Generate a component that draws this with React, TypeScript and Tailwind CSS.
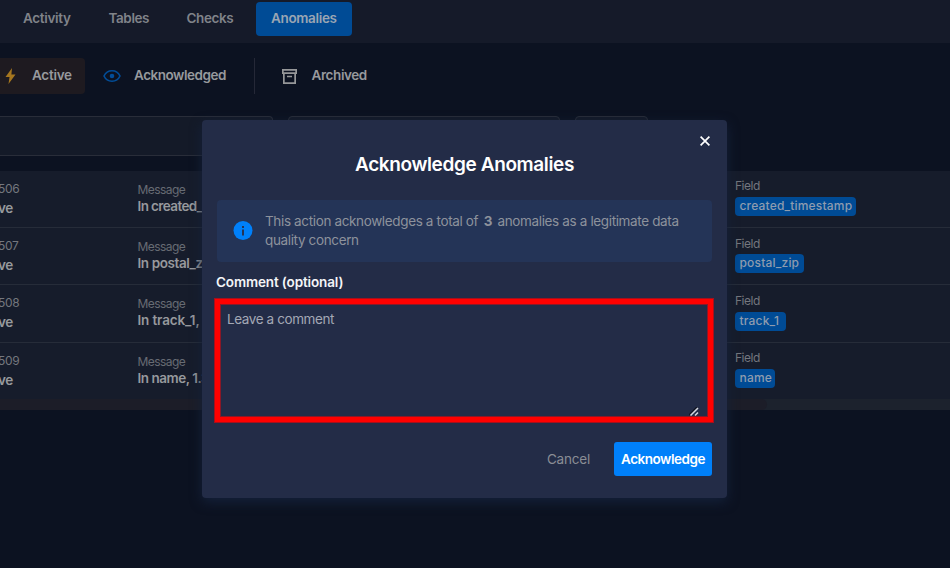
import React from "react";

const rows = [
  { id: "506", message: "In created_timestamp", field: "created_timestamp", width: "w-[121px]", height: "h-14", tracking: "tracking-[-0.045em]", fieldTop: "pt-[6px]", gap: "mt-[2px]" },
  { id: "507", message: "In postal_zip", field: "postal_zip", width: "w-[69px]", height: "h-[57px]", tracking: "tracking-[-0.03em]", fieldTop: "pt-[7px]", gap: "mt-[1px]" },
  { id: "508", message: "In track_1, 1.2%", field: "track_1", width: "w-[51px]", height: "h-[58px]", tracking: "tracking-[-0.01em]", fieldTop: "pt-[7px]", gap: "mt-[2px]" },
  { id: "509", message: "In name, 1.3%", field: "name", width: "w-10", height: "h-[57px]", tracking: "tracking-[-0.035em]", fieldTop: "pt-[6px]", gap: "mt-[2px]" },
];

function Bolt() {
  return (
    <svg width="11" height="18" viewBox="0 0 11 18" fill="#a5761f">
      <path d="M7 1 .5 10h4L3.5 17 10.5 7.5H6.4Z" />
    </svg>
  );
}

function Eye() {
  return (
    <svg width="18" height="14" viewBox="0 0 18 14" fill="none" stroke="#024d98" strokeWidth="1.6">
      <path d="M1 7C2.5 3.7 5.5 1.8 9 1.8S15.500 3.700 17 7C15.500 10.300 12.500 12.200 9 12.200S2.500 10.300 1 7Z" />
      <circle cx="9" cy="7" r="2.300" fill="#024d98" stroke="none" />
    </svg>
  );
}

function Archive() {
  return (
    <svg width="15" height="15" viewBox="0 0 15 15" fill="none" stroke="#969799" strokeWidth="1.700">
      <path d="M.85.85h13.300v3.300H.85ZM1.850 4.150v10h11.300v-10M5 7.500h5" />
    </svg>
  );
}

function Background() {
  return (
    <div className="flex h-full flex-col text-[#97999d]">
      <nav className="flex h-[43px] shrink-0 items-start bg-[#151a29] pt-[2px] text-[13.5px] font-semibold leading-[32px]">
        <span className="ml-[23px] w-[85.5px] tracking-[-0.025em] text-[#808389]">Activity</span>
        <span className="w-[78px] tracking-[-0.03em] text-[#808389]">Tables</span>
        <span className="w-[69.5px] tracking-[-0.03em] text-[#808389]">Checks</span>
        <span className="h-[34px] w-24 rounded-[4px] bg-[#004b95] pl-[15px] tracking-[-0.025em] text-[#9aa5b3]">Anomalies</span>
      </nav>
      <div className="mt-[15px] flex h-9 shrink-0 items-center text-[13.5px] font-semibold leading-[20px]">
        <div className="flex h-full w-[85px] items-center rounded-r-[4px] bg-[#1e1a20] pl-[5px]">
          <Bolt />
          <span className="mb-[2px] ml-4 tracking-[-0.02em]">Active</span>
        </div>
        <div className="flex h-full w-[170px] items-center border-r border-[#252837] pl-[18px]">
          <Eye />
          <span className="mb-[2px] ml-[13px] tracking-[-0.035em]">Acknowledged</span>
        </div>
        <div className="flex items-center pl-[27px]">
          <Archive />
          <span className="mb-[2px] ml-[14.5px] tracking-[-0.03em]">Archived</span>
        </div>
      </div>
      <div className="mt-[22px] flex h-10 shrink-0 gap-[15px]">
        <div className="w-[273px] rounded-tr-[4px] border border-l-0 border-[#292d39] bg-[#141a28]" />
        <div className="w-[272px] rounded-[4px] border border-[#292d39] bg-[#141a28]" />
        <div className="w-[73px] rounded-[4px] border border-[#292d39] bg-[#141a28]" />
      </div>
      <div className="mt-[15px] shrink-0 bg-[#161c2b]">
        {rows.map((row, i) => (
          <div
            key={row.id}
            className={`flex items-start whitespace-nowrap ${row.height} ${i === 0 ? "" : "border-t border-[#262c39]"}`}
          >
            <div className="w-[138px] pt-[9px]">
              <div className="-ml-[2px] text-[12px] leading-[18px] tracking-[-0.03em] text-[#74777e]">{row.id}</div>
              <div className="-ml-[2px] text-[13.5px] font-semibold leading-[20px] tracking-[-0.03em]">ve</div>
            </div>
            <div className="w-[597px] pt-[10px]">
              <div className="-ml-[0.5px] text-[12px] leading-[18px] tracking-[-0.045em] text-[#676b73]">Message</div>
              <div className={`-ml-[0.5px] -mt-[1px] text-[13.5px] font-semibold leading-[16px] ${row.tracking}`}>{row.message}</div>
            </div>
            <div className={row.fieldTop}>
              <div className="text-[12px] leading-[18px] tracking-[-0.04em] text-[#74777e]">Field</div>
              <div className={`h-[19px] rounded-[4px] bg-[#004b95] pl-[4.5px] text-[12px] font-medium leading-[18px] tracking-[0.015em] text-[#8e9caf] ${row.width} ${row.gap}`}>
                {row.field}
              </div>
            </div>
          </div>
        ))}
      </div>
      <div className="h-[11px] shrink-0 bg-[#1c222d]">
        <div className="h-full w-[767px] rounded-r-full bg-[#1c1d28]" />
      </div>
    </div>
  );
}

function Modal() {
  return (
    <div className="flex h-[378px] w-[525px] flex-col rounded-[4px] bg-[#232c47] px-[15px] shadow-[0_4px_12px_0_#14213a]">
      <div className="flex h-[27px] items-end justify-end pr-[2px]">
        <svg width="10" height="10" viewBox="0 0 10 10" className="mb-[1px]" stroke="#fff" strokeWidth="1.700">
          <path d="m.6.6 8.800 8.800M9.400.6.6 9.400" />
        </svg>
      </div>
      <h1 className="mt-[5px] text-center text-[19px] font-semibold leading-[26px] tracking-[-0.02em] text-white">
        Acknowledge Anomalies
      </h1>
      <div className="mt-[22px] flex h-[62px] shrink-0 items-center rounded-[4px] bg-[#243457] pl-4">
        <svg width="20" height="20" viewBox="0 0 20 20" fill="#0080fa">
          <circle cx="10" cy="9.500" r="9.500" />
          <path d="M9 5h2v2H9zM9 8.500h2v6H9z" fill="#243457" />
        </svg>
        <p className="ml-3 whitespace-nowrap text-[13.5px] leading-[19px] tracking-[-0.0265em] text-[#8d929c]">
          This action acknowledges a total of <b className="mx-[2px] font-bold">3</b> anomalies as a legitimate data
          <br />
          quality concern
        </p>
      </div>
      <label className="-ml-[1px] mt-[10px] text-[13.5px] font-semibold leading-[20px] tracking-[-0.01em] text-[#f4f5f7]">
        Comment (optional)
      </label>
      <div className="-ml-[3px] mt-[6px] h-[125px] w-[500px] shrink-0 border border-[#a4101c] bg-[#232c47]">
        <div className="h-full border-[5px] border-[#ff0000]">
          <div className="flex h-full flex-col justify-between border border-[#8a1827]">
            <span className="pl-[6px] pt-[4px] text-[13.5px] leading-[20px] tracking-[-0.03em] text-[#a3a8b5]">
              Leave a comment
            </span>
            <svg width="10" height="9" viewBox="0 0 10 9" className="mr-[8px] self-end" fill="none">
              <path d="M0 8 8 0" stroke="#111522" strokeWidth="1.500" />
              <path d="M1.500 8.500 9 1M6 8.500 9 5.500" stroke="#d5d8df" strokeWidth="1.500" />
            </svg>
          </div>
        </div>
      </div>
      <div className="mt-[19px] flex items-center justify-end text-[13.5px] leading-[34px]">
        <span className="mr-[24px] tracking-[-0.015em] text-[#8a8d95]">Cancel</span>
        <button className="h-[34px] w-[98px] rounded-[3px] bg-[#0080fa] text-center font-semibold leading-[34px] tracking-[-0.035em] text-white">
          Acknowledge
        </button>
      </div>
    </div>
  );
}

export default function App() {
  return (
    <main className="relative h-[568px] w-[950px] overflow-hidden bg-[#0c1221] font-['Inter',sans-serif]">
      <Background />
      <div className="absolute left-[202px] top-[120px]">
        <Modal />
      </div>
    </main>
  );
}
